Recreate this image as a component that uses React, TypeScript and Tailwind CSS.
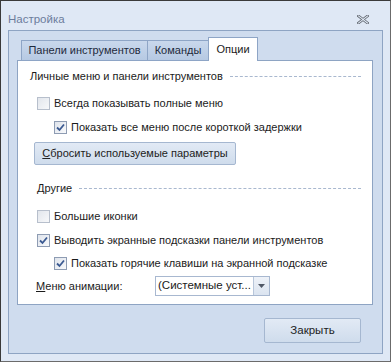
import React from "react";

function Check({ checked }: { checked?: boolean }) {
  return (
    <span
      className={
        "relative flex h-[13px] w-[13px] shrink-0 items-center justify-center border " +
        (checked ? "border-[#8e9cb3] bg-gradient-to-br from-[#dfe4ec] to-[#f8f9fb]" : "border-[#b7bfcc] bg-gradient-to-br from-[#e2e6ec] to-[#f7f8fa]")
      }
    >
      {checked && (
        <svg width="9" height="9" viewBox="0 0 9 9">
          <path d="M1 4.5 L3.5 7 L8 1.5" fill="none" stroke="#3b5a92" strokeWidth="1.8" />
        </svg>
      )}
    </span>
  );
}

function Row({ checked, indent, children, mt }: { checked?: boolean; indent: string; children: React.ReactNode; mt: string }) {
  return (
    <div className={"flex h-[16px] items-center gap-[4px] " + indent + " " + mt}>
      <Check checked={checked} />
      <span className="whitespace-nowrap">{children}</span>
    </div>
  );
}

export default function App() {
  return (
    <div
      className="flex h-[362px] w-[391px] flex-col whitespace-nowrap border border-t-[#3a3a3a] border-l-[#3a3a3a] border-r-[#6b6b6b] border-b-[#6b6b6b] bg-[#dfe8f5] text-[11px] text-[#1b1b1b]"
      style={{ fontFamily: '"Liberation Sans", Arial, sans-serif' }}
    >
      <div className="flex h-[29px] shrink-0 items-center justify-between pl-[7px] pr-[21px] pt-[8px]">
        <span className="text-[11.5px] text-[#6c7c9c]">Настройка</span>
        <svg width="12" height="9" viewBox="0 0 12 9">
          <path d="M1.5 1 L10.5 8 M10.5 1 L1.5 8" stroke="#5b6068" strokeWidth="2.6" strokeLinecap="square" />
          <path d="M1.5 1 L10.5 8 M10.5 1 L1.5 8" stroke="#dfe8f5" strokeWidth="1.1" strokeLinecap="square" />
        </svg>
      </div>
      <div className="mx-[7px] flex h-[324px] flex-col border border-[#8ea4c3] bg-[#cfdcee] pl-[8px] pt-[7px]">
        <div className="relative z-10 -mb-px ml-[4px] flex h-[23px] items-end">
          <div className="flex h-[21px] w-[127px] items-center justify-center border border-[#8ea5c6] bg-gradient-to-b from-[#c9d8ec] to-[#b6c9e3] text-[#1e2a3c]">
            Панели инструментов
          </div>
          <div className="-ml-px flex h-[21px] w-[62px] items-center justify-center border border-[#8ea5c6] bg-gradient-to-b from-[#c9d8ec] to-[#b6c9e3] text-[#1e2a3c]">
            Команды
          </div>
          <div className="-ml-px flex h-[24px] w-[50px] items-center justify-center border border-b-0 border-[#8ea5c6] bg-white pb-[1px]">
            Опции
          </div>
        </div>
        <div className="flex h-[245px] w-[356px] flex-col border border-[#8ea4c3] bg-white">
          <div className="mt-[7px] flex h-[16px] items-center pl-[12px] pr-[11px]">
            <span>Личные меню и панели инструментов</span>
            <span className="ml-[7px] flex-1 border-t border-dashed border-[#a9b8cf]" />
          </div>
          <Row indent="pl-[19px]" mt="mt-[11px]">Всегда показывать полные меню</Row>
          <Row checked indent="pl-[36px]" mt="mt-[8px]">Показать все меню после короткой задержки</Row>
          <div className="ml-[16px] mt-[7px] flex h-[23px] w-[202px] items-center justify-center rounded-[2px] border border-[#a5b7d0] bg-gradient-to-b from-[#e2eaf5] to-[#cfdcec] text-[#222]">
            <span>
              <span className="underline">С</span>бросить используемые параметры
            </span>
          </div>
          <div className="mt-[15px] flex h-[16px] items-center pl-[19px] pr-[11px]">
            <span>Другие</span>
            <span className="ml-[7px] flex-1 border-t border-dashed border-[#a9b8cf]" />
          </div>
          <Row indent="pl-[19px]" mt="mt-[12px]">Большие иконки</Row>
          <Row checked indent="pl-[19px]" mt="mt-[8px]">Выводить экранные подсказки панели инструментов</Row>
          <Row checked indent="pl-[36px]" mt="mt-[7px]">Показать горячие клавиши на экранной подсказке</Row>
          <div className="mt-[5px] flex h-[20px] items-center pl-[18px]">
            <span className="w-[119px]">
              <span className="underline">М</span>еню анимации:
            </span>
            <div className="flex h-[20px] w-[115px] items-stretch border border-[#a8b8d0] bg-white">
              <span className="flex flex-1 items-center pl-[2px] text-[11.5px]">(Системные уст...</span>
              <span className="flex w-[16px] items-center justify-center border-l border-[#b8c6da] bg-gradient-to-b from-[#eef2f8] to-[#dbe4f0]">
                <svg width="7" height="4" viewBox="0 0 7 4">
                  <path d="M0 0 H7 L3.5 4 Z" fill="#505866" />
                </svg>
              </span>
            </div>
          </div>
        </div>
        <div className="mt-[13px] flex justify-end pr-[21px]">
          <div className="flex h-[25px] w-[97px] items-center justify-center rounded-[2px] border border-[#a5b7d0] bg-gradient-to-b from-[#e2eaf5] to-[#cfdcec] text-[11.5px] text-[#222]">
            Закрыть
          </div>
        </div>
      </div>
    </div>
  );
}
